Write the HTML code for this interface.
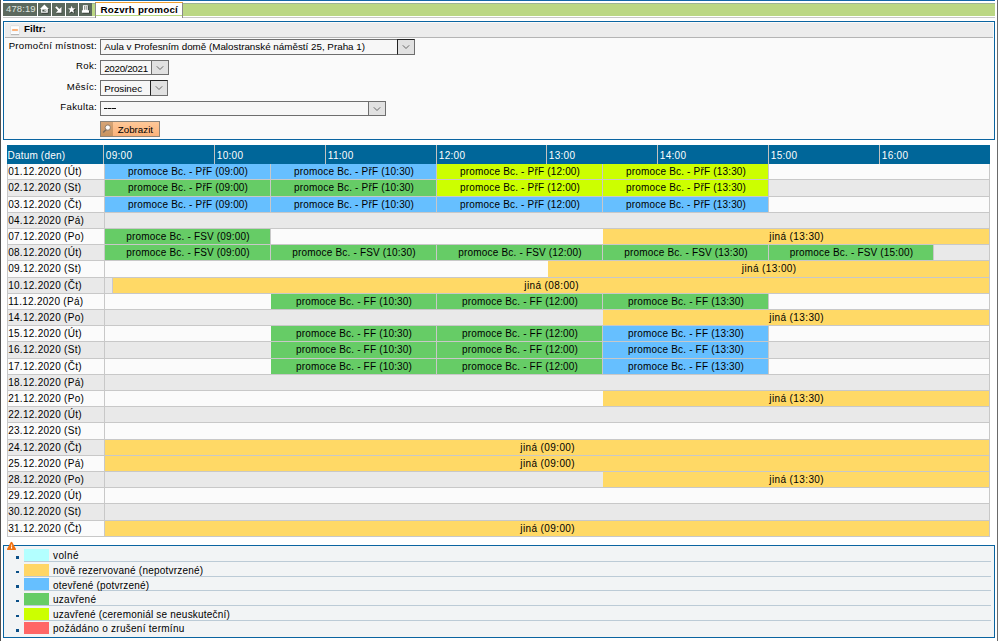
<!DOCTYPE html>
<html><head><meta charset="utf-8"><title>Rozvrh promocí</title>
<style>
html,body{margin:0;padding:0;}
body{width:1000px;height:641px;overflow:hidden;position:relative;background:#fff;font-family:"Liberation Sans", sans-serif;color:#000;}
.a{position:absolute;box-sizing:border-box;}
.t{position:absolute;white-space:nowrap;line-height:1;}
</style></head><body>

<div class="a" style="left:0;top:0;width:1px;height:641px;background:#505050"></div>
<div class="a" style="left:997px;top:0;width:1px;height:641px;background:#6a6a6a"></div>
<div class="a" style="left:3px;top:0;width:992px;height:1px;background:#1166aa"></div>
<div class="a" style="left:3px;top:17px;width:992px;height:1px;background:#c8c8c8"></div>
<div class="a" style="left:92px;top:3px;width:903px;height:13px;background:#bbd784;border-top:1px solid #9db596"></div>
<div class="a" style="left:3px;top:3px;width:34px;height:13px;background:#5c695e"></div>
<div class="a" style="left:38px;top:3px;width:13px;height:13px;background:#5c695e"></div>
<div class="a" style="left:52px;top:3px;width:13px;height:13px;background:#5c695e"></div>
<div class="a" style="left:66px;top:3px;width:12px;height:13px;background:#5c695e"></div>
<div class="a" style="left:79px;top:3px;width:13px;height:13px;background:#5c695e"></div>
<div class="t" style="left:6px;top:4.2px;font-size:9.5px;letter-spacing:0.1px;color:#dfe3df">478:19</div>
<svg class="a" style="left:38px;top:3px" width="13" height="13" viewBox="0 0 13 13">
<path d="M6.4 1.6 L10.9 5.9 L9.8 5.9 L9.8 9.8 L3.1 9.8 L3.1 5.9 L2 5.9 Z" fill="#1a1a1a" opacity=".55" transform="translate(.7,.9)"/>
<path d="M6.4 1.6 L10.9 5.9 L9.8 5.9 L9.8 9.8 L3.1 9.8 L3.1 5.9 L2 5.9 Z" fill="#fff"/>
<rect x="4.3" y="6.6" width="4" height="2" fill="#4a564c"/><rect x="6.5" y="7.1" width="1.3" height="1" fill="#fff"/>
</svg>
<svg class="a" style="left:52px;top:3px" width="13" height="13" viewBox="0 0 13 13">
<path d="M3.2 4.6 L4.6 3.2 L7.4 6 L9.5 3.9 L9.5 9.7 L3.9 9.7 L6 7.6 Z" fill="#1a1a1a" opacity=".55" transform="translate(.7,.9)"/>
<path d="M3.2 4.6 L4.6 3.2 L7.4 6 L9.5 3.9 L9.5 9.7 L3.9 9.7 L6 7.6 Z" fill="#fff"/>
</svg>
<svg class="a" style="left:66px;top:3px" width="12" height="13" viewBox="0 0 12 13">
<path d="M5.7 2.7 L6.7 5.3 L9.4 5.4 L7.3 7.1 L8.1 10 L5.7 8.4 L3.3 10 L4.1 7.1 L2 5.4 L4.7 5.3 Z" fill="#111" opacity=".6" transform="translate(.8,.8)"/>
<path d="M5.7 2.7 L6.7 5.3 L9.4 5.4 L7.3 7.1 L8.1 10 L5.7 8.4 L3.3 10 L4.1 7.1 L2 5.4 L4.7 5.3 Z" fill="#fff"/>
</svg>
<svg class="a" style="left:79px;top:3px" width="13" height="13" viewBox="0 0 13 13">
<path d="M3.9 2.2 L8.8 2.2 L8.8 7.3 L10 7.3 L10 9.8 L2.9 9.8 L2.9 7.3 L3.9 7.3 Z" fill="#111" opacity=".6" transform="translate(.7,.8)"/>
<path d="M3.9 2.2 L8.8 2.2 L8.8 7.3 L10 7.3 L10 9.8 L2.9 9.8 L2.9 7.3 L3.9 7.3 Z" fill="#fff"/>
<rect x="5.3" y="3" width="0.8" height="3.8" fill="#6a756c"/><rect x="6.8" y="3" width="0.8" height="3.8" fill="#6a756c"/>
</svg>
<div class="a" style="left:95px;top:2px;width:88px;height:16px;background:#fff;border-left:1px solid #8a8a8a;border-right:1px solid #8a8a8a;border-top:1px solid #f0a030"></div>
<div class="a" style="left:96px;top:15px;width:86px;height:1px;background:#b8d880"></div>
<div class="t" style="left:100.6px;top:5.2px;font-size:9.8px;letter-spacing:0.2px;font-weight:bold;color:#000">Rozvrh promocí</div>
<div class="a" style="left:3px;top:21px;width:992px;height:119px;border:1px solid #0a64a0;background:#fafafa"></div>
<div class="a" style="left:5px;top:23px;width:924px;height:15px;background:#ececec;border-bottom:1px solid #b4b4b4"></div>
<div class="a" style="left:929px;top:23px;width:64px;height:15px;background:#ececec;border-bottom:1px solid #b4b4b4"></div>
<div class="a" style="left:11px;top:25px;width:8px;height:9px;background:linear-gradient(#f4f4f4,#fff 20%,#f0f6fc 60%,#fff);border-top:1px solid #e0e0e0;box-shadow:0 1px 1px #b8b8b8"></div>
<div class="a" style="left:12.3px;top:29.3px;width:5.3px;height:1.4px;border-radius:0.7px;background:#fdb27a"></div>
<div class="t" style="left:24px;top:24.2px;font-size:9.8px;letter-spacing:0px;font-weight:bold">Filtr:</div>
<div class="t" style="right:902.98px;top:40.9px;font-size:9.6px;letter-spacing:0.32px">Promoční místnost:</div>
<div class="t" style="right:902.98px;top:61.4px;font-size:9.6px;letter-spacing:0.32px">Rok:</div>
<div class="t" style="right:902.98px;top:82.0px;font-size:9.6px;letter-spacing:0.32px">Měsíc:</div>
<div class="t" style="right:902.98px;top:102.4px;font-size:9.6px;letter-spacing:0.32px">Fakulta:</div>
<div class="a" style="left:100px;top:39px;width:315px;height:16px;border:1px solid #6e6e6e;background:#f7f7f7"></div>
<div class="a" style="left:397px;top:39px;width:18px;height:16px;background:#e1e1e1;border:1px solid #6e6e6e;border-left-color:#222;border-top-color:#222"></div>
<svg class="a" style="left:401.0px;top:43.0px" width="10" height="8" viewBox="0 0 10 8"><path d="M1.8 2.3 L5 5.5 L8.2 2.3" fill="none" stroke="#666" stroke-width="1"/></svg>
<div class="t" style="left:104.2px;top:42.30px;font-size:9.8px;letter-spacing:0.01px">Aula v Profesním domě (Malostranské náměstí 25, Praha 1)</div>
<div class="a" style="left:100px;top:60px;width:69px;height:15px;border:1px solid #6e6e6e;background:#f7f7f7"></div>
<div class="a" style="left:151.4px;top:61px;width:16.599999999999994px;height:13px;background:#e1e1e1;border-left:1px solid #6e6e6e"></div>
<svg class="a" style="left:155.2px;top:63.5px" width="10" height="8" viewBox="0 0 10 8"><path d="M1.8 2.3 L5 5.5 L8.2 2.3" fill="none" stroke="#666" stroke-width="1"/></svg>
<div class="t" style="left:104.2px;top:64.40px;font-size:9.8px;letter-spacing:-0.3px">2020/2021</div>
<div class="a" style="left:100px;top:80px;width:68px;height:16px;border:1px solid #6e6e6e;background:#f7f7f7"></div>
<div class="a" style="left:150.2px;top:80px;width:17.80000000000001px;height:16px;background:#e1e1e1;border:1px solid #6e6e6e;border-left-color:#222;border-top-color:#222"></div>
<svg class="a" style="left:154.1px;top:84.0px" width="10" height="8" viewBox="0 0 10 8"><path d="M1.8 2.3 L5 5.5 L8.2 2.3" fill="none" stroke="#666" stroke-width="1"/></svg>
<div class="t" style="left:104.2px;top:83.60px;font-size:9.8px;letter-spacing:-0.04px">Prosinec</div>
<div class="a" style="left:100px;top:101px;width:286px;height:15px;border:1px solid #6e6e6e;background:#f7f7f7"></div>
<div class="a" style="left:368.3px;top:102px;width:16.69999999999999px;height:13px;background:#e1e1e1;border-left:1px solid #6e6e6e"></div>
<svg class="a" style="left:372.15px;top:104.5px" width="10" height="8" viewBox="0 0 10 8"><path d="M1.8 2.3 L5 5.5 L8.2 2.3" fill="none" stroke="#666" stroke-width="1"/></svg>
<div class="t" style="left:104.2px;top:103.40px;font-size:9.8px;letter-spacing:1.2px"></div>
<div class="a" style="left:104px;top:108px;width:3px;height:1px;background:#111"></div>
<div class="a" style="left:107px;top:108px;width:1px;height:1px;background:#777"></div>
<div class="a" style="left:108px;top:108px;width:3px;height:1px;background:#111"></div>
<div class="a" style="left:111px;top:108px;width:1px;height:1px;background:#777"></div>
<div class="a" style="left:112px;top:108px;width:4px;height:1px;background:#111"></div>
<div class="a" style="left:100px;top:121px;width:60px;height:16px;border:1px solid #8c847a;background:linear-gradient(#ffc898,#fbb27a)"></div>
<div class="a" style="left:101px;top:122px;width:12px;height:14px;background:linear-gradient(#d6a476,#c9935f)"></div>
<svg class="a" style="left:101px;top:122px" width="12" height="14" viewBox="0 0 12 14"><path d="M5.2 7.6 L2.2 10.6" stroke="#7a6a5a" stroke-width="1.4"/><circle cx="6.8" cy="5.6" r="2.7" fill="#f4eee8" stroke="#8a7868" stroke-width="0.9"/><rect x="5.4" y="4.2" width="2.6" height="2.6" fill="#fff"/></svg>
<div class="t" style="left:117.8px;top:124.6px;font-size:9.75px">Zobrazit</div>
<div class="a" style="left:7.0px;top:145.0px;width:983.0px;height:19.0px;background:#006699"></div>
<div class="t" style="left:7.5px;top:150.7px;font-size:10px;letter-spacing:0.19px;color:#fff">Datum (den)</div>
<div class="a" style="left:103px;top:145.0px;width:1px;height:19.0px;background:#c4c2c0"></div>
<div class="t" style="left:105.80px;top:150.7px;font-size:10px;letter-spacing:0.29px;color:#fff">09:00</div>
<div class="a" style="left:214px;top:145.0px;width:1px;height:19.0px;background:#c4c2c0"></div>
<div class="t" style="left:216.80px;top:150.7px;font-size:10px;letter-spacing:0.29px;color:#fff">10:00</div>
<div class="a" style="left:325px;top:145.0px;width:1px;height:19.0px;background:#c4c2c0"></div>
<div class="t" style="left:327.80px;top:150.7px;font-size:10px;letter-spacing:0.29px;color:#fff">11:00</div>
<div class="a" style="left:436px;top:145.0px;width:1px;height:19.0px;background:#c4c2c0"></div>
<div class="t" style="left:438.80px;top:150.7px;font-size:10px;letter-spacing:0.29px;color:#fff">12:00</div>
<div class="a" style="left:546px;top:145.0px;width:1px;height:19.0px;background:#c4c2c0"></div>
<div class="t" style="left:548.80px;top:150.7px;font-size:10px;letter-spacing:0.29px;color:#fff">13:00</div>
<div class="a" style="left:657px;top:145.0px;width:1px;height:19.0px;background:#c4c2c0"></div>
<div class="t" style="left:659.80px;top:150.7px;font-size:10px;letter-spacing:0.29px;color:#fff">14:00</div>
<div class="a" style="left:768px;top:145.0px;width:1px;height:19.0px;background:#c4c2c0"></div>
<div class="t" style="left:770.80px;top:150.7px;font-size:10px;letter-spacing:0.29px;color:#fff">15:00</div>
<div class="a" style="left:879px;top:145.0px;width:1px;height:19.0px;background:#c4c2c0"></div>
<div class="t" style="left:881.80px;top:150.7px;font-size:10px;letter-spacing:0.29px;color:#fff">16:00</div>
<div class="a" style="left:7.0px;top:164.0px;width:1px;height:373.0px;background:#c8c8c8"></div>
<div class="a" style="left:8px;top:164.0px;width:982px;height:16.0px;background:#fbfbfb;border-bottom:1px solid #c8c8c8;border-right:1px solid #c8c8c8"></div>
<div class="a" style="left:104px;top:164.0px;width:1px;height:16.0px;background:#c8c8c8"></div>
<div class="t" style="left:8.2px;top:167.30px;font-size:10px;letter-spacing:0.28px">01.12.2020 (Út)</div>
<div class="a" style="left:105px;top:164.0px;width:166px;height:16.0px;background:#66bfff;border-bottom:1px solid #c8c8c8;border-right:1px solid #c8c8c8"></div>
<div class="t" style="left:105.09px;width:166px;text-align:center;top:167.00px;font-size:10px;letter-spacing:0.18px">promoce Bc. - PřF (09:00)</div>
<div class="a" style="left:271px;top:164.0px;width:166px;height:16.0px;background:#66bfff;border-bottom:1px solid #c8c8c8;border-right:1px solid #c8c8c8"></div>
<div class="t" style="left:271.09px;width:166px;text-align:center;top:167.00px;font-size:10px;letter-spacing:0.18px">promoce Bc. - PřF (10:30)</div>
<div class="a" style="left:437px;top:164.0px;width:166px;height:16.0px;background:#ccff00;border-bottom:1px solid #c8c8c8;border-right:1px solid #c8c8c8"></div>
<div class="t" style="left:437.09px;width:166px;text-align:center;top:167.00px;font-size:10px;letter-spacing:0.18px">promoce Bc. - PřF (12:00)</div>
<div class="a" style="left:603px;top:164.0px;width:166px;height:16.0px;background:#ccff00;border-bottom:1px solid #c8c8c8;border-right:1px solid #c8c8c8"></div>
<div class="t" style="left:603.09px;width:166px;text-align:center;top:167.00px;font-size:10px;letter-spacing:0.18px">promoce Bc. - PřF (13:30)</div>
<div class="a" style="left:8px;top:180px;width:982px;height:17px;background:#e9e9e9;border-bottom:1px solid #c8c8c8;border-right:1px solid #c8c8c8"></div>
<div class="a" style="left:104px;top:180px;width:1px;height:17px;background:#c8c8c8"></div>
<div class="t" style="left:8.2px;top:183.30px;font-size:10px;letter-spacing:0.28px">02.12.2020 (St)</div>
<div class="a" style="left:105px;top:180px;width:166px;height:17px;background:#66cc66;border-bottom:1px solid #c8c8c8;border-right:1px solid #c8c8c8"></div>
<div class="t" style="left:105.09px;width:166px;text-align:center;top:183.00px;font-size:10px;letter-spacing:0.18px">promoce Bc. - PřF (09:00)</div>
<div class="a" style="left:271px;top:180px;width:166px;height:17px;background:#66cc66;border-bottom:1px solid #c8c8c8;border-right:1px solid #c8c8c8"></div>
<div class="t" style="left:271.09px;width:166px;text-align:center;top:183.00px;font-size:10px;letter-spacing:0.18px">promoce Bc. - PřF (10:30)</div>
<div class="a" style="left:437px;top:180px;width:166px;height:17px;background:#ccff00;border-bottom:1px solid #c8c8c8;border-right:1px solid #c8c8c8"></div>
<div class="t" style="left:437.09px;width:166px;text-align:center;top:183.00px;font-size:10px;letter-spacing:0.18px">promoce Bc. - PřF (12:00)</div>
<div class="a" style="left:603px;top:180px;width:166px;height:17px;background:#ccff00;border-bottom:1px solid #c8c8c8;border-right:1px solid #c8c8c8"></div>
<div class="t" style="left:603.09px;width:166px;text-align:center;top:183.00px;font-size:10px;letter-spacing:0.18px">promoce Bc. - PřF (13:30)</div>
<div class="a" style="left:8px;top:197px;width:982px;height:16px;background:#fbfbfb;border-bottom:1px solid #c8c8c8;border-right:1px solid #c8c8c8"></div>
<div class="a" style="left:104px;top:197px;width:1px;height:16px;background:#c8c8c8"></div>
<div class="t" style="left:8.2px;top:200.30px;font-size:10px;letter-spacing:0.28px">03.12.2020 (Čt)</div>
<div class="a" style="left:105px;top:197px;width:166px;height:16px;background:#66bfff;border-bottom:1px solid #c8c8c8;border-right:1px solid #c8c8c8"></div>
<div class="t" style="left:105.09px;width:166px;text-align:center;top:200.00px;font-size:10px;letter-spacing:0.18px">promoce Bc. - PřF (09:00)</div>
<div class="a" style="left:271px;top:197px;width:166px;height:16px;background:#66bfff;border-bottom:1px solid #c8c8c8;border-right:1px solid #c8c8c8"></div>
<div class="t" style="left:271.09px;width:166px;text-align:center;top:200.00px;font-size:10px;letter-spacing:0.18px">promoce Bc. - PřF (10:30)</div>
<div class="a" style="left:437px;top:197px;width:166px;height:16px;background:#66bfff;border-bottom:1px solid #c8c8c8;border-right:1px solid #c8c8c8"></div>
<div class="t" style="left:437.09px;width:166px;text-align:center;top:200.00px;font-size:10px;letter-spacing:0.18px">promoce Bc. - PřF (12:00)</div>
<div class="a" style="left:603px;top:197px;width:166px;height:16px;background:#66bfff;border-bottom:1px solid #c8c8c8;border-right:1px solid #c8c8c8"></div>
<div class="t" style="left:603.09px;width:166px;text-align:center;top:200.00px;font-size:10px;letter-spacing:0.18px">promoce Bc. - PřF (13:30)</div>
<div class="a" style="left:8px;top:213px;width:982px;height:16px;background:#e9e9e9;border-bottom:1px solid #c8c8c8;border-right:1px solid #c8c8c8"></div>
<div class="a" style="left:104px;top:213px;width:1px;height:16px;background:#c8c8c8"></div>
<div class="t" style="left:8.2px;top:216.30px;font-size:10px;letter-spacing:0.28px">04.12.2020 (Pá)</div>
<div class="a" style="left:8px;top:229px;width:982px;height:16px;background:#fbfbfb;border-bottom:1px solid #c8c8c8;border-right:1px solid #c8c8c8"></div>
<div class="a" style="left:104px;top:229px;width:1px;height:16px;background:#c8c8c8"></div>
<div class="t" style="left:8.2px;top:232.30px;font-size:10px;letter-spacing:0.28px">07.12.2020 (Po)</div>
<div class="a" style="left:105px;top:229px;width:166px;height:16px;background:#66cc66;border-bottom:1px solid #c8c8c8;border-right:1px solid #c8c8c8"></div>
<div class="t" style="left:105.09px;width:166px;text-align:center;top:232.00px;font-size:10px;letter-spacing:0.18px">promoce Bc. - FSV (09:00)</div>
<div class="a" style="left:603px;top:229px;width:387px;height:16px;background:#ffd966;border-bottom:1px solid #c8c8c8;border-right:1px solid #c8c8c8"></div>
<div class="t" style="left:603.20px;width:387px;text-align:center;top:232.00px;font-size:10px;letter-spacing:0.39px">jiná (13:30)</div>
<div class="a" style="left:8px;top:245px;width:982px;height:16px;background:#e9e9e9;border-bottom:1px solid #c8c8c8;border-right:1px solid #c8c8c8"></div>
<div class="a" style="left:104px;top:245px;width:1px;height:16px;background:#c8c8c8"></div>
<div class="t" style="left:8.2px;top:248.30px;font-size:10px;letter-spacing:0.28px">08.12.2020 (Út)</div>
<div class="a" style="left:105px;top:245px;width:166px;height:16px;background:#66cc66;border-bottom:1px solid #c8c8c8;border-right:1px solid #c8c8c8"></div>
<div class="t" style="left:105.09px;width:166px;text-align:center;top:248.00px;font-size:10px;letter-spacing:0.18px">promoce Bc. - FSV (09:00)</div>
<div class="a" style="left:271px;top:245px;width:166px;height:16px;background:#66cc66;border-bottom:1px solid #c8c8c8;border-right:1px solid #c8c8c8"></div>
<div class="t" style="left:271.09px;width:166px;text-align:center;top:248.00px;font-size:10px;letter-spacing:0.18px">promoce Bc. - FSV (10:30)</div>
<div class="a" style="left:437px;top:245px;width:166px;height:16px;background:#66cc66;border-bottom:1px solid #c8c8c8;border-right:1px solid #c8c8c8"></div>
<div class="t" style="left:437.09px;width:166px;text-align:center;top:248.00px;font-size:10px;letter-spacing:0.18px">promoce Bc. - FSV (12:00)</div>
<div class="a" style="left:603px;top:245px;width:166px;height:16px;background:#66cc66;border-bottom:1px solid #c8c8c8;border-right:1px solid #c8c8c8"></div>
<div class="t" style="left:603.09px;width:166px;text-align:center;top:248.00px;font-size:10px;letter-spacing:0.18px">promoce Bc. - FSV (13:30)</div>
<div class="a" style="left:769px;top:245px;width:165px;height:16px;background:#66cc66;border-bottom:1px solid #c8c8c8;border-right:1px solid #c8c8c8"></div>
<div class="t" style="left:769.09px;width:165px;text-align:center;top:248.00px;font-size:10px;letter-spacing:0.18px">promoce Bc. - FSV (15:00)</div>
<div class="a" style="left:8px;top:261px;width:982px;height:17px;background:#fbfbfb;border-bottom:1px solid #c8c8c8;border-right:1px solid #c8c8c8"></div>
<div class="a" style="left:104px;top:261px;width:1px;height:17px;background:#c8c8c8"></div>
<div class="t" style="left:8.2px;top:264.30px;font-size:10px;letter-spacing:0.28px">09.12.2020 (St)</div>
<div class="a" style="left:548px;top:261px;width:442px;height:17px;background:#ffd966;border-bottom:1px solid #c8c8c8;border-right:1px solid #c8c8c8"></div>
<div class="t" style="left:548.20px;width:442px;text-align:center;top:264.00px;font-size:10px;letter-spacing:0.39px">jiná (13:00)</div>
<div class="a" style="left:8px;top:278px;width:982px;height:16px;background:#e9e9e9;border-bottom:1px solid #c8c8c8;border-right:1px solid #c8c8c8"></div>
<div class="a" style="left:104px;top:278px;width:1px;height:16px;background:#c8c8c8"></div>
<div class="t" style="left:8.2px;top:281.30px;font-size:10px;letter-spacing:0.28px">10.12.2020 (Čt)</div>
<div class="a" style="left:112px;top:278px;width:1px;height:16px;background:#c8c8d0"></div>
<div class="a" style="left:113px;top:278px;width:877px;height:16px;background:#ffd966;border-bottom:1px solid #c8c8c8;border-right:1px solid #c8c8c8"></div>
<div class="t" style="left:113.19px;width:877px;text-align:center;top:281.00px;font-size:10px;letter-spacing:0.39px">jiná (08:00)</div>
<div class="a" style="left:8px;top:294px;width:982px;height:16px;background:#fbfbfb;border-bottom:1px solid #c8c8c8;border-right:1px solid #c8c8c8"></div>
<div class="a" style="left:104px;top:294px;width:1px;height:16px;background:#c8c8c8"></div>
<div class="t" style="left:8.2px;top:297.30px;font-size:10px;letter-spacing:0.28px">11.12.2020 (Pá)</div>
<div class="a" style="left:271px;top:294px;width:166px;height:16px;background:#66cc66;border-bottom:1px solid #c8c8c8;border-right:1px solid #c8c8c8"></div>
<div class="t" style="left:271.09px;width:166px;text-align:center;top:297.00px;font-size:10px;letter-spacing:0.18px">promoce Bc. - FF (10:30)</div>
<div class="a" style="left:437px;top:294px;width:166px;height:16px;background:#66cc66;border-bottom:1px solid #c8c8c8;border-right:1px solid #c8c8c8"></div>
<div class="t" style="left:437.09px;width:166px;text-align:center;top:297.00px;font-size:10px;letter-spacing:0.18px">promoce Bc. - FF (12:00)</div>
<div class="a" style="left:603px;top:294px;width:166px;height:16px;background:#66cc66;border-bottom:1px solid #c8c8c8;border-right:1px solid #c8c8c8"></div>
<div class="t" style="left:603.09px;width:166px;text-align:center;top:297.00px;font-size:10px;letter-spacing:0.18px">promoce Bc. - FF (13:30)</div>
<div class="a" style="left:8px;top:310px;width:982px;height:16px;background:#e9e9e9;border-bottom:1px solid #c8c8c8;border-right:1px solid #c8c8c8"></div>
<div class="a" style="left:104px;top:310px;width:1px;height:16px;background:#c8c8c8"></div>
<div class="t" style="left:8.2px;top:313.30px;font-size:10px;letter-spacing:0.28px">14.12.2020 (Po)</div>
<div class="a" style="left:603px;top:310px;width:387px;height:16px;background:#ffd966;border-bottom:1px solid #c8c8c8;border-right:1px solid #c8c8c8"></div>
<div class="t" style="left:603.20px;width:387px;text-align:center;top:313.00px;font-size:10px;letter-spacing:0.39px">jiná (13:30)</div>
<div class="a" style="left:8px;top:326px;width:982px;height:16px;background:#fbfbfb;border-bottom:1px solid #c8c8c8;border-right:1px solid #c8c8c8"></div>
<div class="a" style="left:104px;top:326px;width:1px;height:16px;background:#c8c8c8"></div>
<div class="t" style="left:8.2px;top:329.30px;font-size:10px;letter-spacing:0.28px">15.12.2020 (Út)</div>
<div class="a" style="left:271px;top:326px;width:166px;height:16px;background:#66cc66;border-bottom:1px solid #c8c8c8;border-right:1px solid #c8c8c8"></div>
<div class="t" style="left:271.09px;width:166px;text-align:center;top:329.00px;font-size:10px;letter-spacing:0.18px">promoce Bc. - FF (10:30)</div>
<div class="a" style="left:437px;top:326px;width:166px;height:16px;background:#66cc66;border-bottom:1px solid #c8c8c8;border-right:1px solid #c8c8c8"></div>
<div class="t" style="left:437.09px;width:166px;text-align:center;top:329.00px;font-size:10px;letter-spacing:0.18px">promoce Bc. - FF (12:00)</div>
<div class="a" style="left:603px;top:326px;width:166px;height:16px;background:#66bfff;border-bottom:1px solid #c8c8c8;border-right:1px solid #c8c8c8"></div>
<div class="t" style="left:603.09px;width:166px;text-align:center;top:329.00px;font-size:10px;letter-spacing:0.18px">promoce Bc. - FF (13:30)</div>
<div class="a" style="left:8px;top:342px;width:982px;height:17px;background:#e9e9e9;border-bottom:1px solid #c8c8c8;border-right:1px solid #c8c8c8"></div>
<div class="a" style="left:104px;top:342px;width:1px;height:17px;background:#c8c8c8"></div>
<div class="t" style="left:8.2px;top:345.30px;font-size:10px;letter-spacing:0.28px">16.12.2020 (St)</div>
<div class="a" style="left:271px;top:342px;width:166px;height:17px;background:#66cc66;border-bottom:1px solid #c8c8c8;border-right:1px solid #c8c8c8"></div>
<div class="t" style="left:271.09px;width:166px;text-align:center;top:345.00px;font-size:10px;letter-spacing:0.18px">promoce Bc. - FF (10:30)</div>
<div class="a" style="left:437px;top:342px;width:166px;height:17px;background:#66cc66;border-bottom:1px solid #c8c8c8;border-right:1px solid #c8c8c8"></div>
<div class="t" style="left:437.09px;width:166px;text-align:center;top:345.00px;font-size:10px;letter-spacing:0.18px">promoce Bc. - FF (12:00)</div>
<div class="a" style="left:603px;top:342px;width:166px;height:17px;background:#66bfff;border-bottom:1px solid #c8c8c8;border-right:1px solid #c8c8c8"></div>
<div class="t" style="left:603.09px;width:166px;text-align:center;top:345.00px;font-size:10px;letter-spacing:0.18px">promoce Bc. - FF (13:30)</div>
<div class="a" style="left:8px;top:359px;width:982px;height:16px;background:#fbfbfb;border-bottom:1px solid #c8c8c8;border-right:1px solid #c8c8c8"></div>
<div class="a" style="left:104px;top:359px;width:1px;height:16px;background:#c8c8c8"></div>
<div class="t" style="left:8.2px;top:362.30px;font-size:10px;letter-spacing:0.28px">17.12.2020 (Čt)</div>
<div class="a" style="left:271px;top:359px;width:166px;height:16px;background:#66cc66;border-bottom:1px solid #c8c8c8;border-right:1px solid #c8c8c8"></div>
<div class="t" style="left:271.09px;width:166px;text-align:center;top:362.00px;font-size:10px;letter-spacing:0.18px">promoce Bc. - FF (10:30)</div>
<div class="a" style="left:437px;top:359px;width:166px;height:16px;background:#66cc66;border-bottom:1px solid #c8c8c8;border-right:1px solid #c8c8c8"></div>
<div class="t" style="left:437.09px;width:166px;text-align:center;top:362.00px;font-size:10px;letter-spacing:0.18px">promoce Bc. - FF (12:00)</div>
<div class="a" style="left:603px;top:359px;width:166px;height:16px;background:#66bfff;border-bottom:1px solid #c8c8c8;border-right:1px solid #c8c8c8"></div>
<div class="t" style="left:603.09px;width:166px;text-align:center;top:362.00px;font-size:10px;letter-spacing:0.18px">promoce Bc. - FF (13:30)</div>
<div class="a" style="left:8px;top:375px;width:982px;height:16px;background:#e9e9e9;border-bottom:1px solid #c8c8c8;border-right:1px solid #c8c8c8"></div>
<div class="a" style="left:104px;top:375px;width:1px;height:16px;background:#c8c8c8"></div>
<div class="t" style="left:8.2px;top:378.30px;font-size:10px;letter-spacing:0.28px">18.12.2020 (Pá)</div>
<div class="a" style="left:8px;top:391px;width:982px;height:16px;background:#fbfbfb;border-bottom:1px solid #c8c8c8;border-right:1px solid #c8c8c8"></div>
<div class="a" style="left:104px;top:391px;width:1px;height:16px;background:#c8c8c8"></div>
<div class="t" style="left:8.2px;top:394.30px;font-size:10px;letter-spacing:0.28px">21.12.2020 (Po)</div>
<div class="a" style="left:603px;top:391px;width:387px;height:16px;background:#ffd966;border-bottom:1px solid #c8c8c8;border-right:1px solid #c8c8c8"></div>
<div class="t" style="left:603.20px;width:387px;text-align:center;top:394.00px;font-size:10px;letter-spacing:0.39px">jiná (13:30)</div>
<div class="a" style="left:8px;top:407px;width:982px;height:16px;background:#e9e9e9;border-bottom:1px solid #c8c8c8;border-right:1px solid #c8c8c8"></div>
<div class="a" style="left:104px;top:407px;width:1px;height:16px;background:#c8c8c8"></div>
<div class="t" style="left:8.2px;top:410.30px;font-size:10px;letter-spacing:0.28px">22.12.2020 (Út)</div>
<div class="a" style="left:8px;top:423px;width:982px;height:17px;background:#fbfbfb;border-bottom:1px solid #c8c8c8;border-right:1px solid #c8c8c8"></div>
<div class="a" style="left:104px;top:423px;width:1px;height:17px;background:#c8c8c8"></div>
<div class="t" style="left:8.2px;top:426.30px;font-size:10px;letter-spacing:0.28px">23.12.2020 (St)</div>
<div class="a" style="left:8px;top:440px;width:982px;height:16px;background:#e9e9e9;border-bottom:1px solid #c8c8c8;border-right:1px solid #c8c8c8"></div>
<div class="a" style="left:104px;top:440px;width:1px;height:16px;background:#c8c8c8"></div>
<div class="t" style="left:8.2px;top:443.30px;font-size:10px;letter-spacing:0.28px">24.12.2020 (Čt)</div>
<div class="a" style="left:105px;top:440px;width:885px;height:16px;background:#ffd966;border-bottom:1px solid #c8c8c8;border-right:1px solid #c8c8c8"></div>
<div class="t" style="left:105.19px;width:885px;text-align:center;top:443.00px;font-size:10px;letter-spacing:0.39px">jiná (09:00)</div>
<div class="a" style="left:8px;top:456px;width:982px;height:16px;background:#fbfbfb;border-bottom:1px solid #c8c8c8;border-right:1px solid #c8c8c8"></div>
<div class="a" style="left:104px;top:456px;width:1px;height:16px;background:#c8c8c8"></div>
<div class="t" style="left:8.2px;top:459.30px;font-size:10px;letter-spacing:0.28px">25.12.2020 (Pá)</div>
<div class="a" style="left:105px;top:456px;width:885px;height:16px;background:#ffd966;border-bottom:1px solid #c8c8c8;border-right:1px solid #c8c8c8"></div>
<div class="t" style="left:105.19px;width:885px;text-align:center;top:459.00px;font-size:10px;letter-spacing:0.39px">jiná (09:00)</div>
<div class="a" style="left:8px;top:472px;width:982px;height:16px;background:#e9e9e9;border-bottom:1px solid #c8c8c8;border-right:1px solid #c8c8c8"></div>
<div class="a" style="left:104px;top:472px;width:1px;height:16px;background:#c8c8c8"></div>
<div class="t" style="left:8.2px;top:475.30px;font-size:10px;letter-spacing:0.28px">28.12.2020 (Po)</div>
<div class="a" style="left:603px;top:472px;width:387px;height:16px;background:#ffd966;border-bottom:1px solid #c8c8c8;border-right:1px solid #c8c8c8"></div>
<div class="t" style="left:603.20px;width:387px;text-align:center;top:475.00px;font-size:10px;letter-spacing:0.39px">jiná (13:30)</div>
<div class="a" style="left:8px;top:488px;width:982px;height:16px;background:#fbfbfb;border-bottom:1px solid #c8c8c8;border-right:1px solid #c8c8c8"></div>
<div class="a" style="left:104px;top:488px;width:1px;height:16px;background:#c8c8c8"></div>
<div class="t" style="left:8.2px;top:491.30px;font-size:10px;letter-spacing:0.28px">29.12.2020 (Út)</div>
<div class="a" style="left:8px;top:504px;width:982px;height:17px;background:#e9e9e9;border-bottom:1px solid #c8c8c8;border-right:1px solid #c8c8c8"></div>
<div class="a" style="left:104px;top:504px;width:1px;height:17px;background:#c8c8c8"></div>
<div class="t" style="left:8.2px;top:507.30px;font-size:10px;letter-spacing:0.28px">30.12.2020 (St)</div>
<div class="a" style="left:8px;top:521px;width:982px;height:16px;background:#fbfbfb;border-bottom:1px solid #c8c8c8;border-right:1px solid #c8c8c8"></div>
<div class="a" style="left:104px;top:521px;width:1px;height:16px;background:#c8c8c8"></div>
<div class="t" style="left:8.2px;top:524.30px;font-size:10px;letter-spacing:0.28px">31.12.2020 (Čt)</div>
<div class="a" style="left:105px;top:521px;width:885px;height:16px;background:#ffd966;border-bottom:1px solid #c8c8c8;border-right:1px solid #c8c8c8"></div>
<div class="t" style="left:105.19px;width:885px;text-align:center;top:524.00px;font-size:10px;letter-spacing:0.39px">jiná (09:00)</div>
<div class="a" style="left:3px;top:545px;width:992px;height:93px;border:1px solid #0a64a0;background:#f2f4f5"></div>
<svg class="a" style="left:6px;top:541px" width="11" height="10" viewBox="0 0 11 10"><path d="M5.5 0.8 Q6 0.8 6.4 1.5 L10 8 Q10.3 9 9.3 9 L1.7 9 Q0.7 9 1 8 L4.6 1.5 Q5 0.8 5.5 0.8Z" fill="#f07010"/><rect x="5" y="3.6" width="1.1" height="1.1" fill="#fff"/><rect x="5" y="5.4" width="1.1" height="2.2" fill="#fff"/></svg>
<div class="a" style="left:16px;top:556px;width:3px;height:3px;background:#0b5088"></div>
<div class="a" style="left:24px;top:549px;width:25px;height:12px;background:#b3ffff"></div>
<div class="a" style="left:24px;top:561px;width:967px;height:1px;background:#bccbd6"></div>
<div class="t" style="left:53px;top:551.40px;font-size:10px;letter-spacing:0.4px">volné</div>
<div class="a" style="left:16px;top:571px;width:3px;height:2px;background:#0b5088"></div>
<div class="a" style="left:24px;top:564px;width:25px;height:12px;background:#ffd666"></div>
<div class="a" style="left:24px;top:576px;width:967px;height:1px;background:#bccbd6"></div>
<div class="t" style="left:53px;top:566.00px;font-size:10px;letter-spacing:0.21px">nově rezervované (nepotvrzené)</div>
<div class="a" style="left:16px;top:585px;width:3px;height:3px;background:#0b5088"></div>
<div class="a" style="left:24px;top:578px;width:25px;height:12px;background:#66bfff"></div>
<div class="a" style="left:24px;top:590px;width:967px;height:1px;background:#bccbd6"></div>
<div class="t" style="left:53px;top:580.60px;font-size:10px;letter-spacing:0.2px">otevřené (potvrzené)</div>
<div class="a" style="left:16px;top:600px;width:3px;height:2px;background:#0b5088"></div>
<div class="a" style="left:24px;top:593px;width:25px;height:12px;background:#66cc66"></div>
<div class="a" style="left:24px;top:605px;width:967px;height:1px;background:#bccbd6"></div>
<div class="t" style="left:53px;top:595.20px;font-size:10px;letter-spacing:0.26px">uzavřené</div>
<div class="a" style="left:16px;top:615px;width:3px;height:2px;background:#0b5088"></div>
<div class="a" style="left:24px;top:608px;width:25px;height:12px;background:#ccff00"></div>
<div class="a" style="left:24px;top:620px;width:967px;height:1px;background:#bccbd6"></div>
<div class="t" style="left:53px;top:609.80px;font-size:10px;letter-spacing:0.21px">uzavřené (ceremoniál se neuskuteční)</div>
<div class="a" style="left:16px;top:629px;width:3px;height:3px;background:#0b5088"></div>
<div class="a" style="left:24px;top:622px;width:25px;height:12px;background:#ff6666"></div>
<div class="t" style="left:53px;top:624.40px;font-size:10px;letter-spacing:0.27px">požádáno o zrušení termínu</div>
</body></html>
